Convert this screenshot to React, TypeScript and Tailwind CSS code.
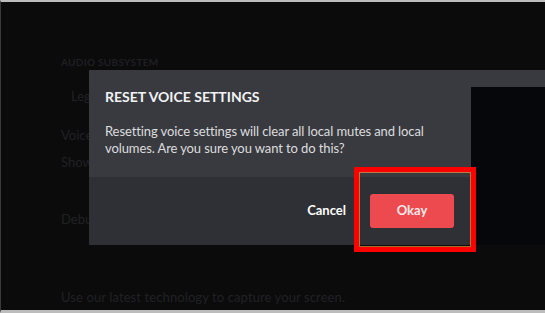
import React from "react";

export default function App() {
  return (
    <div
      className="relative w-[545px] h-[313px] overflow-hidden bg-[#0b0b0c] border-t-[2px] border-t-[#bdbdbd] border-l border-l-[#3a3a3a] border-b-[3px] border-b-[#bcbcbc]"
      style={{ fontFamily: "Lato, 'Noto Sans', sans-serif" }}
    >
      {/* background settings page */}
      <div className="flex flex-col pl-[60px] text-[#212124]">
        <div className="mt-[54px] text-[10px] leading-[12px] font-bold uppercase tracking-[0.3px] text-[#1f1f22]">
          Audio Subsystem
        </div>
        <div className="mt-[20px] pl-[10px] text-[13px] leading-[17px]">Legacy</div>
        <div className="mt-[22px] text-[13px] leading-[17px]">Voice Processing</div>
        <div className="mt-[10px] text-[13px] leading-[17px]">Show Advanced Settings</div>
        <div className="mt-[40px] text-[13px] leading-[17px]">Debug Logging</div>
        <div className="mt-[61px] text-[13px] leading-[17px] tracking-[0.1px]">
          Use our latest technology to capture your screen.
        </div>
      </div>

      {/* modal top strip extension */}
      <div className="absolute left-[470px] top-[68px] w-[75px] h-[17px] bg-[#393a40]" />

      {/* modal */}
      <div className="absolute left-[88px] top-[68px] w-[382px] flex flex-col">
        <div className="bg-[#393a40] h-[107px] pl-[16px] pr-[16px] pt-[18px]">
          <div className="text-[14px] leading-[17px] font-bold text-[#f2f3f5]">
            RESET VOICE SETTINGS
          </div>
          <div className="mt-[18px] text-[13px] leading-[17px] tracking-[-0.1px] text-[#dcddde]">
            Resetting voice settings will clear all local mutes and local volumes. Are you sure you
            want to do this?
          </div>
        </div>
        <div className="bg-[#2f3035] h-[68px] flex items-center justify-end pr-[17px]">
          <button className="mr-[24px] text-[13px] font-bold text-white">Cancel</button>
          <button className="w-[84px] h-[34px] rounded-[3px] bg-[#ec4a4f] text-[13px] font-bold text-[#fbe9ea]">
            Okay
          </button>
        </div>
      </div>

      {/* dark panel on the right */}
      <div className="absolute left-[470px] top-[85px] w-[75px] h-[158px] bg-[#06070a]" />

      {/* red highlight box */}
      <div className="absolute left-[353px] top-[165px] w-[122px] h-[85px] border-[5px] border-[#ff0000]">
        <div className="absolute inset-0 border border-[#e89a3c]/70" />
      </div>
    </div>
  );
}
